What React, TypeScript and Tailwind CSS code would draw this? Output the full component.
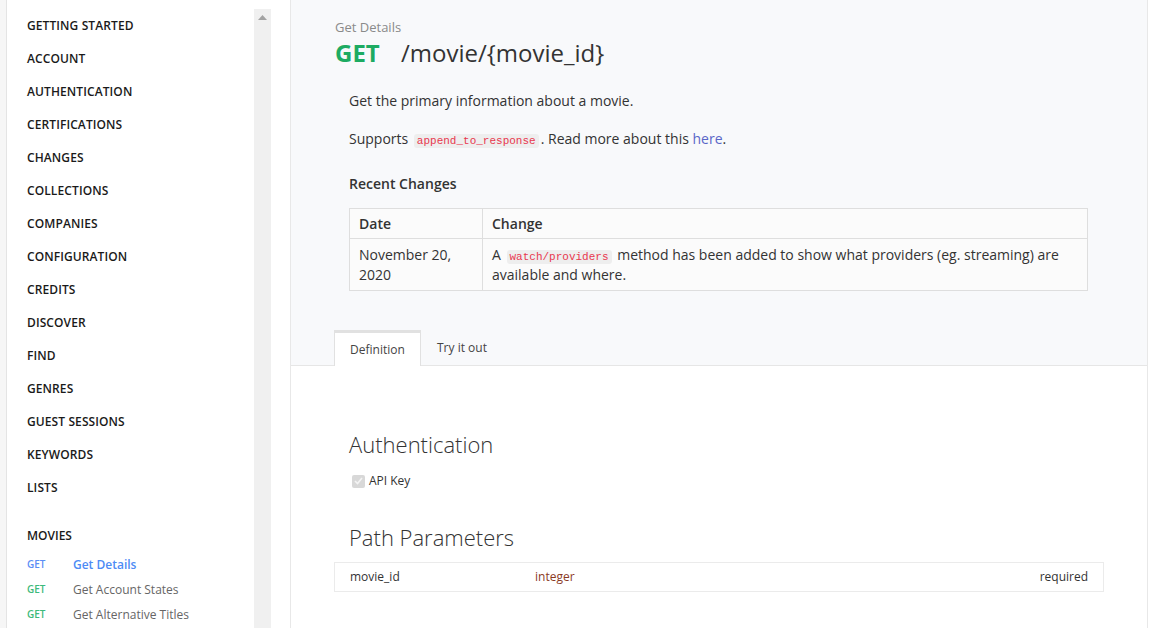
import React from 'react';

const sections = [
  'GETTING STARTED',
  'ACCOUNT',
  'AUTHENTICATION',
  'CERTIFICATIONS',
  'CHANGES',
  'COLLECTIONS',
  'COMPANIES',
  'CONFIGURATION',
  'CREDITS',
  'DISCOVER',
  'FIND',
  'GENRES',
  'GUEST SESSIONS',
  'KEYWORDS',
  'LISTS',
];

const movieEndpoints = [
  { title: 'Get Details', active: true },
  { title: 'Get Account States', active: false },
  { title: 'Get Alternative Titles', active: false },
];

const Sidebar = () => (
  <div className="w-[247px] shrink-0 bg-white pt-[9px]">
    {sections.map(s => (
      <div key={s} className="h-[33px] flex items-center pl-[20px] text-[12px] font-semibold text-[#1a1a1a] tracking-[0.1px]">
        {s}
      </div>
    ))}
    <div className="h-[15px]" />
    <div className="h-[33px] flex items-center pl-[20px] text-[12px] font-semibold text-[#1a1a1a]">MOVIES</div>
    <div>
      {movieEndpoints.map(e => (
        <div key={e.title} className="h-[25px] flex items-center pl-[20px]">
          <span className={`w-[46px] text-[10px] font-semibold ${e.active ? 'text-[#5b8ef5]' : 'text-[#3dba7b]'}`}>GET</span>
          <span className={`text-[12px] ${e.active ? 'text-[#4d8bf5] font-semibold' : 'text-[#666]'}`}>{e.title}</span>
        </div>
      ))}
    </div>
  </div>
);

const Code = ({ children }: { children: React.ReactNode }) => (
  <code className="mx-[2px] px-[3px] py-[1px] leading-[14px] rounded-[3px] bg-[#eeeeee] text-[#e8384f] text-[11px] font-['Liberation_Mono',monospace]">
    {children}
  </code>
);

export default function App() {
  return (
    <div className="w-[1155px] h-[628px] overflow-hidden flex bg-white font-['Open_Sans',sans-serif] text-[#333]">
      <div className="w-[7px] shrink-0 bg-[#f6f6f6] border-r border-[#e4e4e4]" />
      <Sidebar />
      <div className="w-[17px] shrink-0 pt-[9px]">
        <div className="h-full bg-[#f0f0f0] flex justify-center pt-[6px]">
          <svg width="9" height="5" viewBox="0 0 9 5">
            <path d="M0 5 L4.5 0 L9 5 Z" fill="#a3a3a3" />
          </svg>
        </div>
      </div>
      <div className="w-[19px] shrink-0" />
      <div className="flex-1 border-l border-r border-[#e8e8e8] flex flex-col">
        <div className="bg-[#f8f9fb] border-b border-[#e6e6e6]">
          <div className="pl-[44px] pt-[18px]">
            <div className="text-[13px] text-[#8a8a8a] leading-[18px]">Get Details</div>
            <div className="flex items-baseline text-[24px] leading-[34px]">
              <span className="font-bold text-[#1dab62] w-[66px]">GET</span>
              <span className="text-[#333]">/movie/&#123;movie_id&#125;</span>
            </div>
          </div>
          <div className="pl-[58px] pr-[59px] pt-[20px] text-[14px] text-[#333]">
            <p className="leading-[22px]">Get the primary information about a movie.</p>
            <p className="leading-[22px] mt-[16px]">
              Supports <Code>append_to_response</Code>. Read more about this{' '}
              <span className="text-[#5a67c8]">here</span>.
            </p>
            <p className="leading-[22px] mt-[23px] font-semibold">Recent Changes</p>
            <table className="mt-[13px] w-[739px] border-collapse bg-[#fbfbfb] text-[14px]">
              <thead>
                <tr className="h-[30px]">
                  <th className="w-[133px] border border-[#dedede] text-left font-semibold px-[9px]">Date</th>
                  <th className="border border-[#dedede] text-left font-semibold px-[9px]">Change</th>
                </tr>
              </thead>
              <tbody>
                <tr>
                  <td className="border border-[#dedede] px-[9px] pt-[6px] pb-[5px] leading-[20px] align-top">November 20, 2020</td>
                  <td className="border border-[#dedede] px-[9px] pt-[6px] pb-[5px] leading-[20px] align-top">
                    A <Code>watch/providers</Code> method has been added to show what providers (eg. streaming) are available and where.
                  </td>
                </tr>
              </tbody>
            </table>
          </div>
          <div className="pl-[43px] mt-[39px] flex items-end h-[35px] text-[12px]">
            <div className="h-[36px] -mb-[1px] w-[87px] bg-white border-t-[3px] border-l border-r border-[#e1e1e1] flex items-center justify-center text-[#444]">
              Definition
            </div>
            <div className="h-[35px] px-[16px] flex items-center text-[#444]">Try it out</div>
          </div>
        </div>
        <div className="flex-1 bg-white pl-[43px] pr-[43px]">
          <div className="pl-[15px] pt-[63px]">
            <h2 className="text-[22px] font-light leading-[30px] text-[#333]">Authentication</h2>
            <div className="flex items-center mt-[13px] ml-[3px] text-[12px] text-[#333]">
              <span className="w-[13px] h-[13px] rounded-[2px] bg-[#d8d8d8] flex items-center justify-center mr-[4px]">
                <svg width="9" height="8" viewBox="0 0 9 8">
                  <path d="M1 4 L3.5 6.5 L8 1" stroke="#f4f4f4" strokeWidth="1.6" fill="none" />
                </svg>
              </span>
              API Key
            </div>
            <h2 className="text-[22px] font-light leading-[30px] text-[#333] mt-[32px]">Path Parameters</h2>
          </div>
          <div className="mt-[10px] h-[30px] border border-[#ebebeb] flex items-center text-[12px] pl-[15px] pr-[15px]">
            <span className="w-[185px] text-[#333]">movie_id</span>
            <span className="text-[#8b3a1f]">integer</span>
            <span className="ml-auto text-[#333]">required</span>
          </div>
        </div>
      </div>
      <div className="w-[7px] shrink-0 bg-white" />
    </div>
  );
}
